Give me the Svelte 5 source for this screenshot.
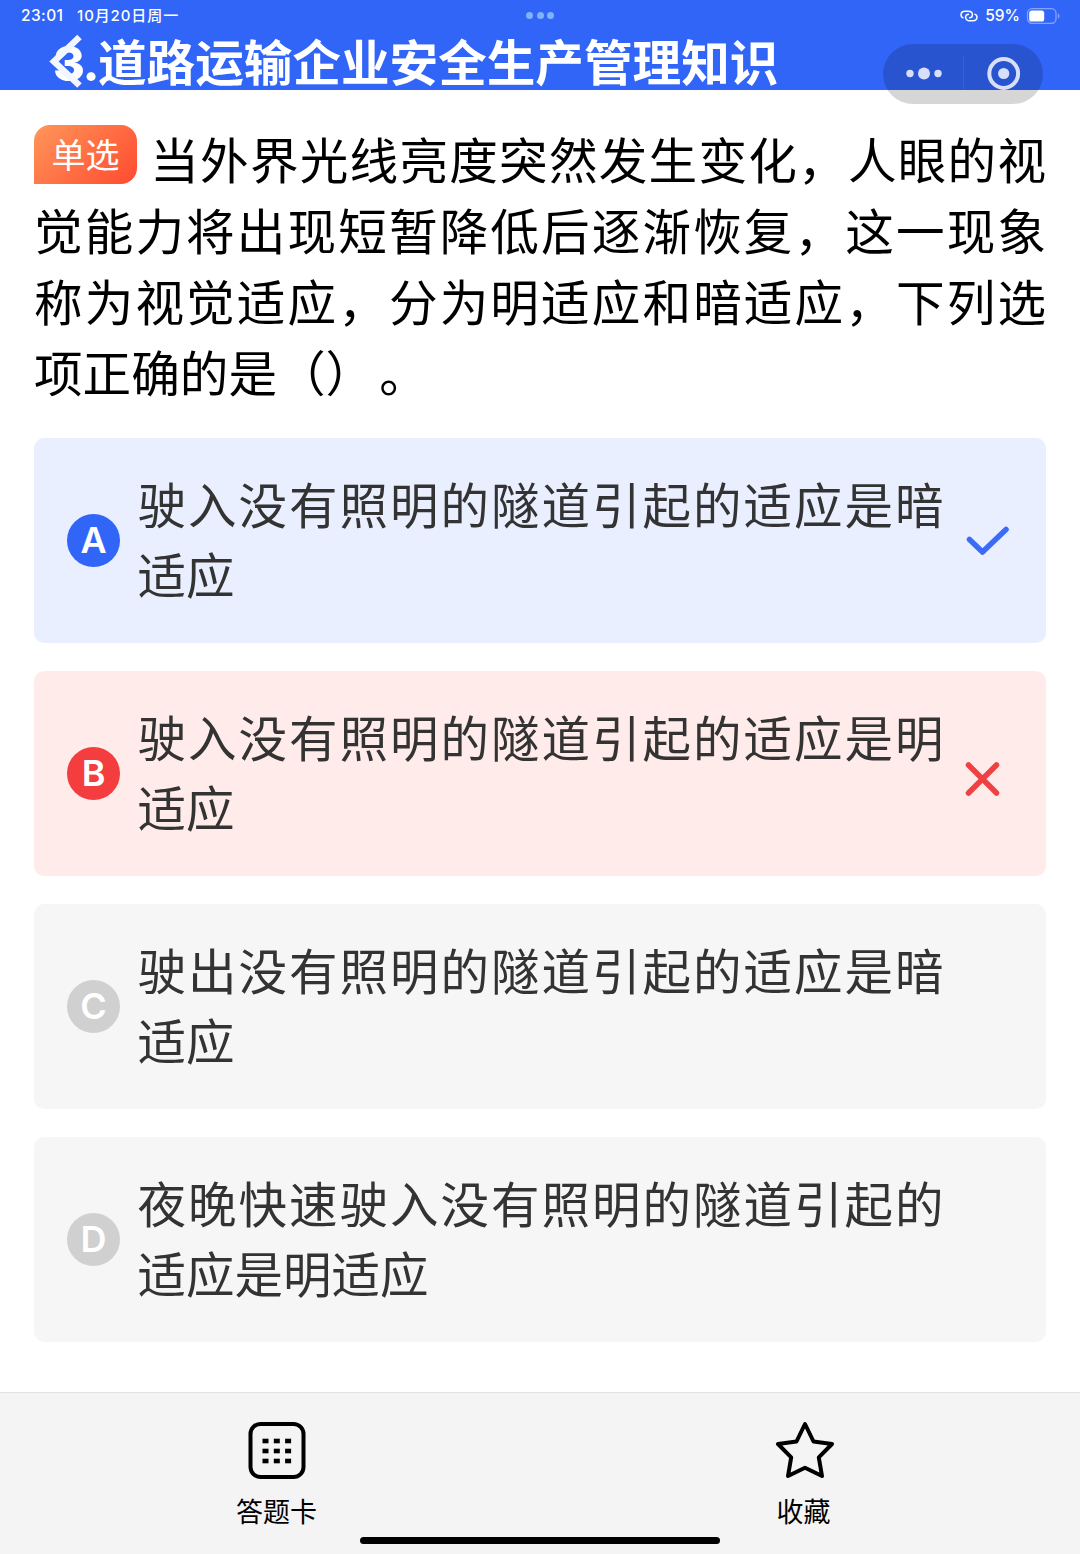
<script>
	const question =
		"当外界光线亮度突然发生变化，人眼的视觉能力将出现短暂降低后逐渐恢复，这一现象称为视觉适应，分为明适应和暗适应，下列选项正确的是（）";

	const options = [
		{ id: "A", text: "驶入没有照明的隧道引起的适应是暗适应", state: "right" },
		{ id: "B", text: "驶入没有照明的隧道引起的适应是明适应", state: "wrong" },
		{ id: "C", text: "驶出没有照明的隧道引起的适应是暗适应", state: "" },
		{ id: "D", text: "夜晚快速驶入没有照明的隧道引起的适应是明适应", state: "" },
	];

	const cells = [0, 1, 2];
</script>

<div class="page">
	<header class="header">
		<div class="status">
			<span class="time">23:01</span>
			<span class="date">10月20日周一</span>
			<svg class="link" width="18" height="12" viewBox="0 0 18 12">
				<path
					d="M3.6 7.9 C1.8 7.4 1 6.4 1 4.9 C1 2.6 2.8 1.2 5 1.2 H8.4 C10.8 1.2 12.4 2.8 12.4 4.7 C12.4 6.6 11 7.8 9 7.8 M14.4 4.1 C16.2 4.6 17 5.6 17 7.1 C17 9.4 15.2 10.8 13 10.8 H9.6 C7.2 10.8 5.6 9.2 5.6 7.3 C5.6 5.4 7 4.2 9 4.2"
				/>
			</svg>
			<span class="percent">59%</span>
			<svg width="35" height="16" viewBox="0 0 35 16">
				<rect class="shell" x="1.5" y="0.7" width="28.5" height="14.6" rx="4.5" />
				<rect x="3.2" y="2.5" width="15" height="11" rx="2.6" fill="#fff" />
				<path d="M31.8 5.5 Q33.6 6.2 33.6 8 Q33.6 9.8 31.8 10.5 Z" fill="#8aa6fa" />
			</svg>
			<div class="multitask"><i></i><i></i><i></i></div>
		</div>
		<h1 class="title"><span class="number">3.</span>道路运输企业安全生产管理知识</h1>
		<svg class="back" width="36" height="56" viewBox="0 0 36 56">
			<path d="M32.5 4 L7 28.5 L32.5 52.5" />
		</svg>
		<div class="capsule">
			<svg width="160" height="60" viewBox="0 0 160 60">
				<g fill="#d7dff9">
					<circle cx="27" cy="29.5" r="3.7" />
					<circle cx="41" cy="29.5" r="6" />
					<circle cx="55" cy="29.5" r="3.7" />
					<circle cx="120.7" cy="29.5" r="5.6" />
				</g>
				<circle class="ring" cx="120.7" cy="29.5" r="14.4" />
				<path d="M80.5 12 V45" stroke="#3a5fd8" />
			</svg>
		</div>
	</header>

	<main class="content">
		<p class="question"><span class="tag">单选</span>{question}<span class="stop">。</span></p>

		{#each options as option}
			<div class="option {option.state}">
				<span class="letter">{option.id}</span>
				<p class="text">{option.text}</p>
				{#if option.state === "right"}
					<svg class="mark" width="46" height="46" viewBox="0 0 46 46">
						<path d="M5.5 22.5 L18.5 35 L42 12.5" />
					</svg>
				{:else if option.state === "wrong"}
					<svg class="mark" width="46" height="46" viewBox="0 0 46 46">
						<path d="M4.5 15 L32.5 43 M32.5 15 L4.5 43" />
					</svg>
				{/if}
			</div>
		{/each}
	</main>

	<footer class="footer">
		<div class="action">
			<svg width="60" height="60" viewBox="0 0 60 60">
				<rect class="stroke" x="3.5" y="4" width="53" height="53" rx="10" />
				{#each cells as row}
					{#each cells as col}
						<rect x={15.5 + col * 11.3} y={18.7 + row * 10} width="6" height="4.6" />
					{/each}
				{/each}
			</svg>
			<span>答题卡</span>
		</div>
		<div class="action">
			<svg width="60" height="60" viewBox="0 0 60 60">
				<path
					class="stroke"
					d="M31 4 L39.5 21.5 L58 24 L44.8 37.3 L48 56 L31 47.8 L14 56 L17.2 37.3 L4 24 L22.5 21.5 Z"
				/>
			</svg>
			<span>收藏</span>
		</div>
		<div class="home"></div>
	</footer>
</div>

<style>
	:global(body) {
		margin: 0;
		background: #fff;
	}

	.page {
		display: flex;
		flex-direction: column;
		width: 1080px;
		height: 1554px;
		overflow: hidden;
		font-family: "Noto Sans CJK SC", sans-serif;
		text-spacing-trim: space-all;
	}

	.header {
		position: relative;
		flex: none;
		height: 89.5px;
		background: #3165f8;
		color: #fff;
	}

	.status {
		position: relative;
		display: flex;
		align-items: center;
		height: 32px;
		padding: 0 19px 0 21px;
		font: 500 15.5px/32px Inter, "Noto Sans CJK SC", sans-serif;
	}

	.time {
		width: 56px;
		letter-spacing: 0.4px;
	}

	.date {
		font-size: 15px;
		letter-spacing: 0.9px;
	}

	.link {
		margin-left: auto;
		fill: none;
		stroke: #fff;
		stroke-width: 1.5;
	}

	.percent {
		margin: 0 6px 0 7px;
	}

	.shell {
		fill: none;
		stroke: #84a3fb;
		stroke-width: 1.3;
	}

	.multitask {
		position: absolute;
		top: 12px;
		left: 526px;
		display: flex;
		gap: 3.5px;
	}

	.multitask i {
		width: 7px;
		height: 7px;
		border-radius: 50%;
		background: #7fb2ff;
	}

	.title {
		margin: -2px 0 0;
		padding-left: 53px;
		font-size: 48.6px;
		font-weight: 700;
		line-height: 60px;
		white-space: nowrap;
	}

	.number {
		display: inline-block;
		width: 45px;
		font-family: Inter, sans-serif;
		font-weight: 800;
		letter-spacing: -1.5px;
	}

	.back {
		position: absolute;
		top: 33px;
		left: 47px;
		fill: none;
		stroke: #f3f6ff;
		stroke-width: 6.5;
	}

	.capsule {
		position: absolute;
		top: 44px;
		left: 883px;
		width: 160px;
		height: 60px;
		border-radius: 30px;
		background: rgba(0, 0, 0, 0.16);
	}

	.ring {
		fill: none;
		stroke: #d7dff9;
		stroke-width: 4;
	}

	.content {
		flex: 1;
		padding: 33px 34px 0;
	}

	.question {
		margin: 0 0 31px;
		height: 284px;
		font-size: 48.6px;
		line-height: 71px;
		text-align: justify;
		color: #000;
	}

	.tag {
		display: inline-block;
		width: 103px;
		height: 59px;
		margin-top: 2px;
		margin-right: 12px;
		border-radius: 16px 16px 16px 0;
		background: linear-gradient(135deg, #ff9659, #ff4a30);
		color: #fff;
		font-size: 34px;
		line-height: 58px;
		text-align: center;
		vertical-align: top;
	}

	.stop {
		margin-left: 5px;
	}

	.option {
		display: flex;
		align-items: center;
		box-sizing: border-box;
		height: 205px;
		margin-bottom: 28px;
		padding: 0 35px 0 33px;
		border-radius: 10px;
		background: #f6f6f6;
		color: #333;
	}

	.letter {
		width: 53px;
		height: 53px;
		margin-right: 17px;
		border-radius: 50%;
		background: #d0d0d0;
		color: #fff;
		font: 600 36px/53px Inter, sans-serif;
		text-align: center;
	}

	.text {
		width: 806px;
		margin: -4px 0 0 0.5px;
		font-size: 48.5px;
		line-height: 70px;
		text-align: justify;
	}

	.mark {
		margin-left: 20px;
		fill: none;
		stroke: #3b6cf8;
		stroke-width: 5.5;
		stroke-linecap: round;
		stroke-linejoin: round;
	}

	.right {
		background: #e9effe;
	}

	.right .letter {
		background: #3165f8;
	}

	.wrong {
		background: #feebea;
	}

	.wrong .letter {
		background: #f33d3e;
	}

	.wrong .mark {
		stroke: #f04142;
	}

	.footer {
		position: relative;
		display: flex;
		justify-content: space-between;
		box-sizing: border-box;
		flex: none;
		height: 162px;
		padding: 27px 222px 0 222px;
		border-top: 1px solid #e2e2e2;
		background: #f4f4f4;
	}

	.action {
		display: flex;
		flex-direction: column;
		align-items: center;
		width: 109px;
		font-size: 27px;
		line-height: 40px;
		gap: 11px;
		color: #000;
	}

	.stroke {
		fill: none;
		stroke: #000;
		stroke-width: 4;
		stroke-linejoin: round;
	}

	.home {
		position: absolute;
		bottom: 10px;
		left: 360px;
		width: 360px;
		height: 7px;
		border-radius: 4px;
		background: #000;
	}
</style>
